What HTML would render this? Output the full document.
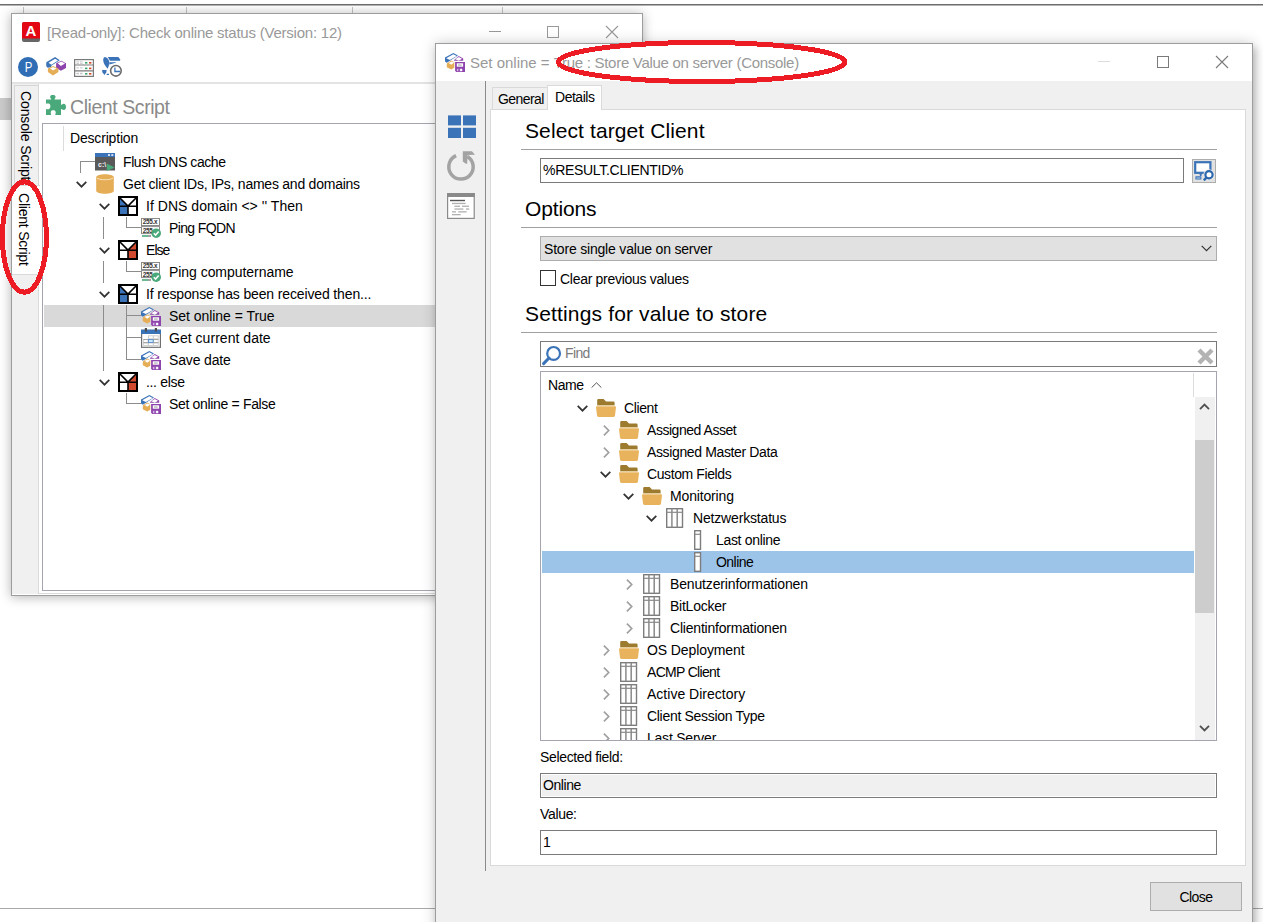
<!DOCTYPE html>
<html lang="en"><head><meta charset="utf-8"><title>Check online status</title><style>
*{box-sizing:border-box;margin:0;padding:0}
html,body{width:1263px;height:922px;overflow:hidden;background:#fff}
body{position:relative;font-family:"Liberation Sans",Arial,sans-serif;font-size:14px;color:#000}
.a{position:absolute}
.t{position:absolute;white-space:nowrap;line-height:22px;height:22px}
.win{position:absolute;border:1px solid #9d9d9d}
.w1{box-shadow:0 1px 11px rgba(0,0,0,.30)}
.w2{box-shadow:0 0 13px rgba(0,0,0,.20),3px 5px 7px rgba(0,0,0,.18)}
.title{position:absolute;white-space:nowrap;color:#999;line-height:20px;height:20px}
.hl{position:absolute;height:1px;background:#a0a0a0}
.vl{position:absolute;width:1px;background:#a0a0a0}
.h1{position:absolute;white-space:nowrap;line-height:26px;height:26px}
.box{position:absolute;border:1px solid #7a7a7a;background:#fff;height:25px}
svg{position:absolute;overflow:visible}
</style></head><body>
<div class="a" style="left:0;top:0;width:1263px;height:4px;background:#fff"></div>
<div class="a" style="left:0;top:4px;width:1263px;height:1px;background:#6d6d6d"></div>
<div class="a" style="left:0;top:5px;width:1263px;height:1px;background:#b5b5b5"></div>
<div class="vl" style="left:23px;top:7px;height:7px;background:#c6c6c6"></div>
<div class="vl" style="left:186px;top:7px;height:7px;background:#c6c6c6"></div>
<div class="vl" style="left:352px;top:7px;height:7px;background:#c6c6c6"></div>
<div class="vl" style="left:502px;top:7px;height:7px;background:#c6c6c6"></div>
<div class="a" style="left:0;top:98px;width:12px;height:22px;background:#cbcbcb"></div>
<div class="hl" style="left:0;top:908px;width:1263px;background:#a9a9a9"></div>
<div class="win w1" style="left:11px;top:13px;width:632px;height:583px;background:#fff"></div>
<div class="a" style="left:12px;top:14px;width:630px;height:581px;overflow:hidden" id="w1">
<svg style="left:10px;top:8px" width="18" height="20" viewBox="0 0 18 20"><rect width="18" height="20" rx="2" fill="#666"/><path d="M0 2 Q0 0 2 0 H16 Q18 0 18 2 V16.5 H0 Z" fill="#e30613"/><text x="9" y="13.6" text-anchor="middle" font-size="15" font-weight="bold" fill="#fff" font-family="Liberation Sans,sans-serif">A</text></svg>
<div class="title" style="left:35px;top:9px;font-size:15px;letter-spacing:-0.225px">[Read-only]: Check online status (Version: 12)</div>
<div class="a" style="left:477px;top:17px;width:12px;height:1px;background:#999"></div>
<div class="a" style="left:535px;top:12px;width:12px;height:12px;border:1px solid #999"></div>
<svg style="left:594px;top:12px" width="12" height="12" viewBox="0 0 12 12"><path d="M0 0 L12 12 M12 0 L0 12" stroke="#999" stroke-width="1.1" fill="none"/></svg>
<svg style="left:6px;top:43px" width="20" height="20" viewBox="0 0 20 20"><circle cx="10" cy="10" r="10" fill="#2f6db5"/><text x="0" y="0" transform="translate(6.7 15.3) scale(0.78 1)" font-size="14.6" fill="#fff" font-family="Liberation Sans,sans-serif">P</text></svg>
<svg style="left:34px;top:43px" width="20" height="20" viewBox="0 0 20 20"><path d="M0.25 5.2 L9.1 0.1 L13.8 3.2 L5.6 8.6 L5 10.2 L1.7 10.8 L0.25 9.3 Z" fill="#3b73b9"/><path d="M2.5 5.85 L9.1 1.7 L12 3.6 L5.4 7.7 Z" fill="#fff"/><path d="M15.3 3.8 L20 6.3 V11 L14.9 13.7 L10.1 11 V6.3 Z" fill="#8e44ad"/><path d="M11.6 6.3 L15.3 4.6 L19 6.5 L14.9 8.9 Z" fill="#fff"/><path d="M7 9.1 L12.4 11.6 V15.1 L7 18.6 L1.9 15.1 V11.6 Z" fill="#e5ad55"/><path d="M4.2 11.4 L7 10 L10.5 11.4 L7 13.5 Z" fill="#fff"/></svg>
<svg style="left:62px;top:45px" width="20" height="18" viewBox="0 0 20 18"><rect x="0.6" y="0.6" width="18.8" height="16.8" fill="#fff" stroke="#7a7a7a" stroke-width="1.2"/><path d="M0.6 6 H19.4 M0.6 11.8 H19.4" stroke="#7a7a7a" stroke-width="1.2"/><g fill="#c4c4c4"><rect x="2.4" y="2.4" width="2.6" height="1"/><rect x="6" y="2.4" width="2.6" height="1"/><rect x="2.4" y="4" width="2.6" height="0.8"/><rect x="6" y="4" width="2.6" height="0.8"/><rect x="2.4" y="8.4" width="2.6" height="1"/><rect x="6" y="8.4" width="2.6" height="1"/><rect x="2.4" y="13.8" width="2.6" height="1.4"/><rect x="6" y="13.8" width="2.6" height="1.4"/></g><g fill="#3aa86b"><rect x="11" y="3" width="2.4" height="1.6"/><rect x="11" y="8.6" width="2.4" height="1.6"/><rect x="11" y="14" width="2.4" height="1.6"/></g><g fill="#d1492e"><rect x="15" y="3" width="2.4" height="1.6"/><rect x="15" y="8.6" width="2.4" height="1.6"/><rect x="15" y="14" width="2.4" height="1.6"/></g></svg>
<svg style="left:90px;top:43px" width="21" height="21" viewBox="0 0 21 21"><path d="M3 0.1 C1 0.6 0.8 3.6 1.8 6 C2.8 8.4 4.4 10.4 5.6 11.7 C6.6 10 7.2 7.4 7.3 4.9 C6.8 2.8 5.6 0.6 3 0.1 Z" fill="#3b73b9"/><path d="M5.9 0.1 H16.3 L18.3 2.6 L18 3.8 H7.8 Z" fill="#3b73b9"/><path d="M7.3 5.2 H14 L13.8 5.8 L7.3 7.4 Z" fill="#3b73b9"/><path d="M0 13.1 H4.7 L4.2 15.6 L2.5 17.9 L0.5 15.6 Z" fill="#3b73b9"/><path d="M5 16.7 H7 V17.9 H4.5 Z" fill="#3b73b9"/><circle cx="13.9" cy="13.8" r="5.3" fill="#fff" stroke="#6a6a6a" stroke-width="1.6"/><path d="M12.9 10.4 V14.5 H18" fill="none" stroke="#3b73b9" stroke-width="1.3"/></svg>
<div class="a" style="left:0px;top:68px;width:630px;height:2px;background:#e3e3e3"></div>
<div class="a" style="left:0px;top:70px;width:27px;height:510px;background:#f0f0f0"></div>
<div class="a" style="left:26px;top:70px;width:604px;height:510px;border-left:1px solid #dadada;border-bottom:1px solid #dadada"></div>
<div class="a" style="left:2px;top:71px;width:25px;height:101px;background:#f0f0f0;border:1px solid #d6d6d6"></div>
<div class="a" style="left:0px;top:171px;width:28px;height:90px;background:#fff;border:1px solid #dadada;border-right:none;border-left:none"></div>
<div class="a" style="left:22px;top:77.3px;transform-origin:0 0;transform:rotate(90deg);white-space:nowrap;line-height:16px;height:16px;letter-spacing:-0.12px">Console Script</div>
<div class="a" style="left:19.5px;top:179.4px;transform-origin:0 0;transform:rotate(90deg);white-space:nowrap;line-height:16px;height:16px;letter-spacing:-0.22px">Client Script</div>
<svg style="left:34px;top:81px" width="20" height="20" viewBox="0 0 20 20"><path d="M0 4.6 H5.2 C5.2 3.6 4 3 4.1 1.8 C4.2 0.4 5.6 0 6.85 0 C8.1 0 9.5 0.4 9.6 1.8 C9.7 3 8.5 3.6 8.5 4.6 H15 V9.8 C16 9.8 16.6 8.7 17.8 8.7 C19.2 8.8 20 10.2 20 11.9 C20 13.6 19.2 15 17.8 15 C16.6 15 16 14 15 14 V19.9 H9.3 C9.3 18.9 9.9 18.2 9.7 17 C9.4 15.6 8.3 15.2 7.2 15.2 C6.1 15.2 5 15.6 4.8 17 C4.6 18.2 5.1 18.9 5.1 19.9 H0 V13.9 C1 13.9 1.6 14.4 2.6 14.2 C3.8 13.9 4.4 12.6 4.4 11.3 C4.4 10 3.8 8.9 2.6 8.6 C1.6 8.4 1 8.7 0 8.7 Z" fill="#4aa97a"/></svg>
<div class="a" style="left:58px;top:81px;font-size:19.5px;letter-spacing:-0.433px;white-space:nowrap;line-height:24px;color:#8a8a8a">Client Script</div>
<div class="a" style="left:30px;top:109px;width:610px;height:468px;border:1px solid #a5a5b0;background:#fff"></div>
<div class="vl" style="left:51px;top:112px;height:25px;background:#dcdcdc"></div>
<div class="t" style="left:58px;top:113px;letter-spacing:-0.176px">Description</div>
<div class="hl" style="left:68px;top:147px;width:15px;background:#8c8c8c"></div>
<svg style="left:83px;top:139px" width="20" height="18" viewBox="0 0 20 18"><rect x="0" y="0" width="20" height="17.5" fill="#595959"/><rect x="0" y="0" width="20" height="4" fill="#3b73b9"/><rect x="13" y="1.3" width="2" height="1.5" fill="#fff"/><rect x="16.3" y="1.3" width="2" height="1.5" fill="#fff"/><text x="3" y="14.2" font-size="7" font-weight="bold" fill="#f2f2f2" font-family="Liberation Sans,sans-serif">c:\</text><path d="M11.8 10.6 L19.6 14.6 L11.8 18 Z" fill="#4aa97a"/></svg>
<div class="t" style="left:111px;top:137px;letter-spacing:-0.423px">Flush DNS cache</div>
<svg style="left:64px;top:167px" width="11" height="7" viewBox="0 0 11 7"><path d="M0.7 0.9 L5.5 5.7 L10.3 0.9" fill="none" stroke="#333" stroke-width="1.7"/></svg>
<svg style="left:84px;top:160px" width="18" height="20" viewBox="0 0 18 20"><path d="M0.2 3.2 C0.2 -0.8 17.8 -0.8 17.8 3.2 V16.8 C17.8 20.8 0.2 20.8 0.2 16.8 Z" fill="#e5ad55"/><path d="M0.8 3.8 C2.4 6.4 15.6 6.4 17.2 3.8" fill="none" stroke="#f8e3bd" stroke-width="1"/></svg>
<div class="t" style="left:111px;top:159px;letter-spacing:-0.237px">Get client IDs, IPs, names and domains</div>
<svg style="left:87px;top:189px" width="11" height="7" viewBox="0 0 11 7"><path d="M0.7 0.9 L5.5 5.7 L10.3 0.9" fill="none" stroke="#333" stroke-width="1.7"/></svg>
<svg style="left:106px;top:182px" width="20" height="20" viewBox="0 0 20 20"><rect x="0" y="0" width="20" height="20" fill="#fff"/><path d="M1 1.5 L10 10 H1 Z" fill="#3b73b9"/><rect x="1" y="10" width="9" height="9" fill="#3b73b9"/><rect x="1" y="1" width="18" height="18" fill="none" stroke="#000" stroke-width="2"/><path d="M1.5 1.5 L10 10 L18.5 1.5 M10 10 V19 M1 10.3 H19" fill="none" stroke="#000" stroke-width="1.6"/></svg>
<div class="t" style="left:134px;top:181px;letter-spacing:0.035px">If DNS domain &lt;&gt; '' Then</div>
<div class="hl" style="left:114px;top:213px;width:15px;background:#8c8c8c"></div>
<svg style="left:129px;top:204px" width="20" height="20" viewBox="0 0 20 20"><rect x="0.5" y="0.5" width="18" height="7" fill="#fff" stroke="#8a8a8a"/><rect x="0.5" y="8.6" width="18" height="7" fill="#fff" stroke="#8a8a8a"/><text x="1.8" y="6.4" font-size="6.4" font-weight="bold" fill="#333" font-family="Liberation Sans,sans-serif" letter-spacing="-0.3">255.x</text><text x="1.8" y="14.5" font-size="6.4" font-weight="bold" fill="#333" font-family="Liberation Sans,sans-serif" letter-spacing="-0.3">255</text><rect x="1" y="17.2" width="6" height="1.6" fill="#4aa97a"/><rect x="7" y="17.2" width="3" height="1.6" fill="#8a8a8a"/><circle cx="15.2" cy="15.2" r="4.8" fill="#4aa97a"/><path d="M12.8 15.2 L14.6 17.1 L17.7 13.5" fill="none" stroke="#fff" stroke-width="1.5"/></svg>
<div class="t" style="left:157px;top:203px;letter-spacing:-0.62px">Ping FQDN</div>
<svg style="left:87px;top:233px" width="11" height="7" viewBox="0 0 11 7"><path d="M0.7 0.9 L5.5 5.7 L10.3 0.9" fill="none" stroke="#333" stroke-width="1.7"/></svg>
<svg style="left:106px;top:226px" width="20" height="20" viewBox="0 0 20 20"><rect x="0" y="0" width="20" height="20" fill="#fff"/><path d="M19 1.5 L10 10 H19 Z" fill="#d1492e"/><rect x="10" y="10" width="9" height="9" fill="#d1492e"/><rect x="1" y="1" width="18" height="18" fill="none" stroke="#000" stroke-width="2"/><path d="M1.5 1.5 L10 10 L18.5 1.5 M10 10 V19 M1 10.3 H19" fill="none" stroke="#000" stroke-width="1.6"/></svg>
<div class="t" style="left:134px;top:225px;letter-spacing:-0.959px">Else</div>
<div class="hl" style="left:114px;top:257px;width:15px;background:#8c8c8c"></div>
<svg style="left:129px;top:248px" width="20" height="20" viewBox="0 0 20 20"><rect x="0.5" y="0.5" width="18" height="7" fill="#fff" stroke="#8a8a8a"/><rect x="0.5" y="8.6" width="18" height="7" fill="#fff" stroke="#8a8a8a"/><text x="1.8" y="6.4" font-size="6.4" font-weight="bold" fill="#333" font-family="Liberation Sans,sans-serif" letter-spacing="-0.3">255.x</text><text x="1.8" y="14.5" font-size="6.4" font-weight="bold" fill="#333" font-family="Liberation Sans,sans-serif" letter-spacing="-0.3">255</text><rect x="1" y="17.2" width="6" height="1.6" fill="#4aa97a"/><rect x="7" y="17.2" width="3" height="1.6" fill="#8a8a8a"/><circle cx="15.2" cy="15.2" r="4.8" fill="#4aa97a"/><path d="M12.8 15.2 L14.6 17.1 L17.7 13.5" fill="none" stroke="#fff" stroke-width="1.5"/></svg>
<div class="t" style="left:157px;top:247px;letter-spacing:-0.047px">Ping computername</div>
<svg style="left:87px;top:277px" width="11" height="7" viewBox="0 0 11 7"><path d="M0.7 0.9 L5.5 5.7 L10.3 0.9" fill="none" stroke="#333" stroke-width="1.7"/></svg>
<svg style="left:106px;top:270px" width="20" height="20" viewBox="0 0 20 20"><rect x="0" y="0" width="20" height="20" fill="#fff"/><path d="M1 1.5 L10 10 H1 Z" fill="#3b73b9"/><rect x="1" y="10" width="9" height="9" fill="#3b73b9"/><rect x="1" y="1" width="18" height="18" fill="none" stroke="#000" stroke-width="2"/><path d="M1.5 1.5 L10 10 L18.5 1.5 M10 10 V19 M1 10.3 H19" fill="none" stroke="#000" stroke-width="1.6"/></svg>
<div class="t" style="left:134px;top:269px;letter-spacing:-0.137px">If response has been received then...</div>
<div class="a" style="left:32px;top:291px;width:600px;height:22px;background:#d9d9d9"></div>
<div class="hl" style="left:114px;top:301px;width:15px;background:#8c8c8c"></div>
<svg style="left:129px;top:292px" width="20" height="20" viewBox="0 0 20 20"><path d="M1.8 11.5 L6.2 8.6 L9.3 10.2 V15.7 L6.2 17.5 L1.8 15.2 Z" fill="#e5ad55"/><path d="M3.6 11 L6.4 9.5 L9.2 10.6 L6.4 12.7 Z" fill="#fff"/><path d="M0 5.55 L8.3 1 L13 3.5 L5.4 8.4 L1.8 10.8 L0 9.5 Z" fill="#3b73b9"/><path d="M1.25 6.3 L8.3 2.3 L11.7 4 L4.9 7.9 Z" fill="#fff"/><path d="M9.1 7.9 L13.75 4.1 L18.2 6.6 V8.8 H9.1 Z" fill="#8e44ad"/><path d="M10.2 7.2 L13.75 5 L17 6.85 L13.75 8.8 Z" fill="#fff"/><path d="M10.1 10 H20 V19.9 H11.2 L10.1 18.8 Z" fill="#8e44ad"/><rect x="11.8" y="11.3" width="6.3" height="3.4" fill="#fff"/><rect x="13" y="12.5" width="3.7" height="1.1" fill="#aaa"/><rect x="11.9" y="16.8" width="5.5" height="2.4" fill="#d4b8e3"/><rect x="13.4" y="16.8" width="1.4" height="2.4" fill="#8e44ad"/><rect x="15.2" y="16.9" width="1.8" height="2.2" fill="#fff"/></svg>
<div class="t" style="left:157px;top:291px;letter-spacing:-0.044px">Set online = True</div>
<div class="hl" style="left:114px;top:323px;width:15px;background:#8c8c8c"></div>
<svg style="left:129px;top:314px" width="20" height="20" viewBox="0 0 20 20"><rect x="0.6" y="2.4" width="18.8" height="16.9" fill="#fff" stroke="#6f6f6f" stroke-width="1.2"/><rect x="0" y="1.6" width="20" height="4.4" fill="#3b73b9"/><rect x="3.8" y="0" width="2.2" height="3.6" fill="#4d4d4d"/><rect x="13.8" y="0" width="2.2" height="3.6" fill="#4d4d4d"/><g fill="#fff" stroke="#cdcdcd" stroke-width="0.9"><rect x="7.4" y="7.8" width="4.8" height="3"/><rect x="12.6" y="7.8" width="4.6" height="3"/><rect x="2.6" y="11.6" width="4.6" height="2.8"/><rect x="12.6" y="11.6" width="4.6" height="2.8"/><rect x="2.6" y="15" width="4.6" height="2.5"/><rect x="7.4" y="15" width="4.8" height="2.5"/><rect x="12.6" y="15" width="4.6" height="2.5"/></g><rect x="7.4" y="11.6" width="4.8" height="2.8" fill="#d3ecfd" stroke="#4d86c6" stroke-width="0.9"/><path d="M2.3 11.5 H7 M12.6 11.5 H17.4 M2.3 14.6 H7 M12.6 14.6 H17.4" stroke="#8f8f8f" stroke-width="0.7" fill="none"/></svg>
<div class="t" style="left:157px;top:313px;letter-spacing:0.033px">Get current date</div>
<div class="hl" style="left:114px;top:345px;width:15px;background:#8c8c8c"></div>
<svg style="left:129px;top:336px" width="20" height="20" viewBox="0 0 20 20"><path d="M1.8 11.5 L6.2 8.6 L9.3 10.2 V15.7 L6.2 17.5 L1.8 15.2 Z" fill="#e5ad55"/><path d="M3.6 11 L6.4 9.5 L9.2 10.6 L6.4 12.7 Z" fill="#fff"/><path d="M0 5.55 L8.3 1 L13 3.5 L5.4 8.4 L1.8 10.8 L0 9.5 Z" fill="#3b73b9"/><path d="M1.25 6.3 L8.3 2.3 L11.7 4 L4.9 7.9 Z" fill="#fff"/><path d="M9.1 7.9 L13.75 4.1 L18.2 6.6 V8.8 H9.1 Z" fill="#8e44ad"/><path d="M10.2 7.2 L13.75 5 L17 6.85 L13.75 8.8 Z" fill="#fff"/><path d="M10.1 10 H20 V19.9 H11.2 L10.1 18.8 Z" fill="#8e44ad"/><rect x="11.8" y="11.3" width="6.3" height="3.4" fill="#fff"/><rect x="13" y="12.5" width="3.7" height="1.1" fill="#aaa"/><rect x="11.9" y="16.8" width="5.5" height="2.4" fill="#d4b8e3"/><rect x="13.4" y="16.8" width="1.4" height="2.4" fill="#8e44ad"/><rect x="15.2" y="16.9" width="1.8" height="2.2" fill="#fff"/></svg>
<div class="t" style="left:157px;top:335px;letter-spacing:-0.151px">Save date</div>
<svg style="left:87px;top:365px" width="11" height="7" viewBox="0 0 11 7"><path d="M0.7 0.9 L5.5 5.7 L10.3 0.9" fill="none" stroke="#333" stroke-width="1.7"/></svg>
<svg style="left:106px;top:358px" width="20" height="20" viewBox="0 0 20 20"><rect x="0" y="0" width="20" height="20" fill="#fff"/><path d="M19 1.5 L10 10 H19 Z" fill="#d1492e"/><rect x="10" y="10" width="9" height="9" fill="#d1492e"/><rect x="1" y="1" width="18" height="18" fill="none" stroke="#000" stroke-width="2"/><path d="M1.5 1.5 L10 10 L18.5 1.5 M10 10 V19 M1 10.3 H19" fill="none" stroke="#000" stroke-width="1.6"/></svg>
<div class="t" style="left:134px;top:357px;letter-spacing:-0.331px">... else</div>
<div class="hl" style="left:114px;top:389px;width:15px;background:#8c8c8c"></div>
<svg style="left:129px;top:380px" width="20" height="20" viewBox="0 0 20 20"><path d="M1.8 11.5 L6.2 8.6 L9.3 10.2 V15.7 L6.2 17.5 L1.8 15.2 Z" fill="#e5ad55"/><path d="M3.6 11 L6.4 9.5 L9.2 10.6 L6.4 12.7 Z" fill="#fff"/><path d="M0 5.55 L8.3 1 L13 3.5 L5.4 8.4 L1.8 10.8 L0 9.5 Z" fill="#3b73b9"/><path d="M1.25 6.3 L8.3 2.3 L11.7 4 L4.9 7.9 Z" fill="#fff"/><path d="M9.1 7.9 L13.75 4.1 L18.2 6.6 V8.8 H9.1 Z" fill="#8e44ad"/><path d="M10.2 7.2 L13.75 5 L17 6.85 L13.75 8.8 Z" fill="#fff"/><path d="M10.1 10 H20 V19.9 H11.2 L10.1 18.8 Z" fill="#8e44ad"/><rect x="11.8" y="11.3" width="6.3" height="3.4" fill="#fff"/><rect x="13" y="12.5" width="3.7" height="1.1" fill="#aaa"/><rect x="11.9" y="16.8" width="5.5" height="2.4" fill="#d4b8e3"/><rect x="13.4" y="16.8" width="1.4" height="2.4" fill="#8e44ad"/><rect x="15.2" y="16.9" width="1.8" height="2.2" fill="#fff"/></svg>
<div class="t" style="left:157px;top:379px;letter-spacing:-0.332px">Set online = False</div>
<div class="vl" style="left:68px;top:147px;height:12px;background:#8c8c8c"></div>
<div class="vl" style="left:114px;top:203px;height:11px;background:#8c8c8c"></div>
<div class="vl" style="left:91px;top:203px;height:22px;background:#8c8c8c"></div>
<div class="vl" style="left:114px;top:247px;height:11px;background:#8c8c8c"></div>
<div class="vl" style="left:91px;top:247px;height:22px;background:#8c8c8c"></div>
<div class="vl" style="left:114px;top:291px;height:55px;background:#8c8c8c"></div>
<div class="vl" style="left:91px;top:291px;height:66px;background:#8c8c8c"></div>
<div class="vl" style="left:114px;top:379px;height:11px;background:#8c8c8c"></div>
</div>
<div class="win w2" style="left:435px;top:43px;width:818px;height:900px;background:#f0f0f0"></div>
<div class="a" style="left:436px;top:44px;width:816px;height:878px;overflow:hidden;background:#f0f0f0" id="w2">
<div class="a" style="left:0px;top:0px;width:816px;height:37px;background:#fff"></div>
<svg style="left:9px;top:8px" width="20" height="20" viewBox="0 0 20 20"><path d="M1.8 11.5 L6.2 8.6 L9.3 10.2 V15.7 L6.2 17.5 L1.8 15.2 Z" fill="#e5ad55"/><path d="M3.6 11 L6.4 9.5 L9.2 10.6 L6.4 12.7 Z" fill="#fff"/><path d="M0 5.55 L8.3 1 L13 3.5 L5.4 8.4 L1.8 10.8 L0 9.5 Z" fill="#3b73b9"/><path d="M1.25 6.3 L8.3 2.3 L11.7 4 L4.9 7.9 Z" fill="#fff"/><path d="M9.1 7.9 L13.75 4.1 L18.2 6.6 V8.8 H9.1 Z" fill="#8e44ad"/><path d="M10.2 7.2 L13.75 5 L17 6.85 L13.75 8.8 Z" fill="#fff"/><path d="M10.1 10 H20 V19.9 H11.2 L10.1 18.8 Z" fill="#8e44ad"/><rect x="11.8" y="11.3" width="6.3" height="3.4" fill="#fff"/><rect x="13" y="12.5" width="3.7" height="1.1" fill="#aaa"/><rect x="11.9" y="16.8" width="5.5" height="2.4" fill="#d4b8e3"/><rect x="13.4" y="16.8" width="1.4" height="2.4" fill="#8e44ad"/><rect x="15.2" y="16.9" width="1.8" height="2.2" fill="#fff"/></svg>
<div class="title" style="left:34px;top:9px;font-size:15px;letter-spacing:-0.009px">Set online = <span style="white-space:pre;letter-spacing:-0.283px">True : Store Value on server (Console)</span></div>
<div class="a" style="left:662px;top:17px;width:12px;height:1px;background:#dcdcdc"></div>
<div class="a" style="left:721px;top:12px;width:12px;height:12px;border:1px solid #7a7a7a"></div>
<svg style="left:780px;top:12px" width="12" height="12" viewBox="0 0 12 12"><path d="M0 0 L12 12 M12 0 L0 12" stroke="#7a7a7a" stroke-width="1.1" fill="none"/></svg>
<div class="vl" style="left:49px;top:37px;height:790px;background:#8a8a8a"></div>
<svg style="left:12px;top:71px" width="28" height="23" viewBox="0 0 28 23"><g fill="#3b73b9"><rect x="0" y="0.4" width="13" height="10"/><rect x="15" y="0.4" width="13" height="10"/><rect x="0" y="12.8" width="13" height="10.2"/><rect x="15" y="12.8" width="13" height="10.2"/></g></svg>
<svg style="left:11px;top:106px" width="29" height="31" viewBox="0 0 29 31"><path d="M9.1 5.7 A12.2 12.2 0 1 0 20.4 6.5" fill="none" stroke="#a3a3a3" stroke-width="3.5"/><path d="M15.8 1.2 H24.9 L28 4.7 L20.6 4.9 L20.2 13.8 H18.9 L15.8 11.4 Z" fill="#a3a3a3"/></svg>
<svg style="left:11px;top:149px" width="28" height="26" viewBox="0 0 28 26"><rect x="0.6" y="0.6" width="26.6" height="24.8" fill="#fff" stroke="#8a8a8a" stroke-width="1.2"/><rect x="0" y="0" width="27.8" height="4" fill="#8a8a8a"/><rect x="3" y="6.8" width="15" height="1.4" fill="#555"/><g fill="#b0b0b0"><rect x="5" y="9.8" width="13.6" height="1.3"/><rect x="7.4" y="12.6" width="5.6" height="1.3"/><rect x="15" y="12.6" width="7" height="1.3"/><rect x="7.4" y="15.4" width="9" height="1.3"/><rect x="19" y="15.4" width="3.2" height="1.3"/><rect x="5" y="18.2" width="4" height="1.3"/><rect x="11.2" y="18.2" width="8.4" height="1.3"/><rect x="5" y="21" width="8.6" height="1.3"/></g></svg>
<div class="a" style="left:54px;top:65px;width:756px;height:757px;background:#fff;border:1px solid #dadada"></div>
<div class="a" style="left:56px;top:43px;width:56px;height:22px;background:#f0f0f0;border:1px solid #dadada;border-bottom:none"></div>
<div class="a" style="left:111px;top:41px;width:55px;height:25px;background:#fff;border:1px solid #dadada;border-bottom:none"></div>
<div class="t" style="left:62px;top:44px;letter-spacing:-0.587px">General</div>
<div class="t" style="left:119px;top:42px;letter-spacing:-0.485px">Details</div>
<div class="h1" style="left:89px;top:74px;font-size:21px;letter-spacing:0.108px">Select target Client</div>
<div class="hl" style="left:85px;top:105px;width:696px"></div>
<div class="box" style="left:104px;top:114px;width:644px"></div>
<div class="t" style="left:107px;top:115px;letter-spacing:-0.301px">%RESULT.CLIENTID%</div>
<div class="a" style="left:756px;top:115px;width:24px;height:24px;background:#e1e1e1;border:1px solid #adadad"></div>
<svg style="left:758px;top:117px" width="21" height="21" viewBox="0 0 21 21"><rect x="1.2" y="1.2" width="15.2" height="10.6" fill="#fff" stroke="#3b73b9" stroke-width="2.2"/><path d="M5.4 12.6 H8 L7.4 15 H6 Z" fill="#3b73b9"/><rect x="1.4" y="15.2" width="6" height="3.4" rx="0.6" fill="#3b73b9"/><rect x="2.4" y="16.4" width="4" height="1.2" fill="#a9c4e4"/><circle cx="15" cy="13.8" r="5.6" fill="#e8e8e8"/><path d="M12.4 16.6 L9.6 19.6" stroke="#e8e8e8" stroke-width="4"/><circle cx="15" cy="13.8" r="3.6" fill="#fff" stroke="#2c68ae" stroke-width="2.2"/><path d="M12.4 16.6 L9.8 19.4" stroke="#2c68ae" stroke-width="2.4"/></svg>
<div class="h1" style="left:89px;top:152px;font-size:21px;letter-spacing:-0.139px">Options</div>
<div class="hl" style="left:85px;top:183px;width:696px"></div>
<div class="a" style="left:104px;top:192px;width:677px;height:25px;background:#e1e1e1;border:1px solid #adadad"></div>
<div class="t" style="left:108px;top:194px;letter-spacing:-0.191px">Store single value on server</div>
<svg style="left:765px;top:201px" width="11" height="7" viewBox="0 0 11 7"><path d="M0.7 0.9 L5.5 5.7 L10.3 0.9" fill="none" stroke="#333" stroke-width="1.2"/></svg>
<div class="a" style="left:104px;top:226px;width:16px;height:16px;background:#fff;border:1px solid #333"></div>
<div class="t" style="left:124px;top:224px;letter-spacing:-0.287px">Clear previous values</div>
<div class="h1" style="left:89px;top:257px;font-size:21px;letter-spacing:0.158px">Settings for value to store</div>
<div class="hl" style="left:85px;top:288px;width:696px"></div>
<div class="box" style="left:104px;top:297px;width:677px;height:26px"></div>
<svg style="left:106px;top:301px" width="20" height="20" viewBox="0 0 20 20"><circle cx="11.6" cy="8.4" r="6.4" fill="#fff" stroke="#3b73b9" stroke-width="2.2"/><path d="M7 13 L1.6 18.6" stroke="#3b73b9" stroke-width="3" stroke-linecap="round"/></svg>
<div class="t" style="left:129px;top:298px;letter-spacing:-0.609px;color:#7a7a7a">Find</div>
<svg style="left:760.5999999999999px;top:303.5px" width="17" height="17" viewBox="0 0 17 17"><path d="M2 2 L15 15 M15 2 L2 15" stroke="#b3b3b3" stroke-width="4.4" stroke-linecap="butt"/></svg>
<div class="a" style="left:104px;top:327px;width:677px;height:370px;border:1px solid #a5a5b0;background:#fff"></div>
<div class="a" style="left:105px;top:328px;width:675px;height:368px;overflow:hidden">
<div class="t" style="left:7px;top:2px;letter-spacing:-0.44px">Name</div>
<svg style="left:50px;top:10px" width="11" height="6" viewBox="0 0 11 6"><path d="M0.6 5.6 L5.5 0.8 L10.4 5.6" fill="none" stroke="#555" stroke-width="1"/></svg>
<div class="vl" style="left:652px;top:1px;height:24px;background:#dcdcdc"></div>
<svg style="left:36px;top:33px" width="11" height="7" viewBox="0 0 11 7"><path d="M0.7 0.9 L5.5 5.7 L10.3 0.9" fill="none" stroke="#333" stroke-width="1.7"/></svg>
<svg style="left:55px;top:27px" width="20" height="18" viewBox="0 0 20 18"><path d="M1.2 1.2 Q1.2 0 2.4 0 H7.6 L10 2.6 H17.4 Q18.6 2.6 18.6 3.8 V6.4 H1.2 Z" fill="#9c7a2e"/><path d="M0 8 Q0 7.2 1 7.2 H19 Q20 7.2 20 8 L19 16.6 Q18.9 18 17.6 18 H2.4 Q1.1 18 1 16.6 Z" fill="#e8b35c"/><rect x="1.2" y="6.4" width="17.4" height="0.8" fill="#f3d9a4"/></svg>
<div class="t" style="left:83px;top:25px;letter-spacing:-0.383px">Client</div>
<svg style="left:62px;top:53px" width="7" height="11" viewBox="0 0 7 11"><path d="M0.9 0.7 L5.7 5.5 L0.9 10.3" fill="none" stroke="#a0a0a0" stroke-width="1.7"/></svg>
<svg style="left:78px;top:49px" width="20" height="18" viewBox="0 0 20 18"><path d="M1.2 1.2 Q1.2 0 2.4 0 H7.6 L10 2.6 H17.4 Q18.6 2.6 18.6 3.8 V6.4 H1.2 Z" fill="#9c7a2e"/><path d="M0 8 Q0 7.2 1 7.2 H19 Q20 7.2 20 8 L19 16.6 Q18.9 18 17.6 18 H2.4 Q1.1 18 1 16.6 Z" fill="#e8b35c"/><rect x="1.2" y="6.4" width="17.4" height="0.8" fill="#f3d9a4"/></svg>
<div class="t" style="left:106px;top:47px;letter-spacing:-0.46px">Assigned Asset</div>
<svg style="left:62px;top:75px" width="7" height="11" viewBox="0 0 7 11"><path d="M0.9 0.7 L5.7 5.5 L0.9 10.3" fill="none" stroke="#a0a0a0" stroke-width="1.7"/></svg>
<svg style="left:78px;top:71px" width="20" height="18" viewBox="0 0 20 18"><path d="M1.2 1.2 Q1.2 0 2.4 0 H7.6 L10 2.6 H17.4 Q18.6 2.6 18.6 3.8 V6.4 H1.2 Z" fill="#9c7a2e"/><path d="M0 8 Q0 7.2 1 7.2 H19 Q20 7.2 20 8 L19 16.6 Q18.9 18 17.6 18 H2.4 Q1.1 18 1 16.6 Z" fill="#e8b35c"/><rect x="1.2" y="6.4" width="17.4" height="0.8" fill="#f3d9a4"/></svg>
<div class="t" style="left:106px;top:69px;letter-spacing:-0.367px">Assigned Master Data</div>
<svg style="left:59px;top:99px" width="11" height="7" viewBox="0 0 11 7"><path d="M0.7 0.9 L5.5 5.7 L10.3 0.9" fill="none" stroke="#333" stroke-width="1.7"/></svg>
<svg style="left:78px;top:93px" width="20" height="18" viewBox="0 0 20 18"><path d="M1.2 1.2 Q1.2 0 2.4 0 H7.6 L10 2.6 H17.4 Q18.6 2.6 18.6 3.8 V6.4 H1.2 Z" fill="#9c7a2e"/><path d="M0 8 Q0 7.2 1 7.2 H19 Q20 7.2 20 8 L19 16.6 Q18.9 18 17.6 18 H2.4 Q1.1 18 1 16.6 Z" fill="#e8b35c"/><rect x="1.2" y="6.4" width="17.4" height="0.8" fill="#f3d9a4"/></svg>
<div class="t" style="left:106px;top:91px;letter-spacing:-0.398px">Custom Fields</div>
<svg style="left:82px;top:121px" width="11" height="7" viewBox="0 0 11 7"><path d="M0.7 0.9 L5.5 5.7 L10.3 0.9" fill="none" stroke="#333" stroke-width="1.7"/></svg>
<svg style="left:101px;top:115px" width="20" height="18" viewBox="0 0 20 18"><path d="M1.2 1.2 Q1.2 0 2.4 0 H7.6 L10 2.6 H17.4 Q18.6 2.6 18.6 3.8 V6.4 H1.2 Z" fill="#9c7a2e"/><path d="M0 8 Q0 7.2 1 7.2 H19 Q20 7.2 20 8 L19 16.6 Q18.9 18 17.6 18 H2.4 Q1.1 18 1 16.6 Z" fill="#e8b35c"/><rect x="1.2" y="6.4" width="17.4" height="0.8" fill="#f3d9a4"/></svg>
<div class="t" style="left:129px;top:113px;letter-spacing:-0.158px">Monitoring</div>
<svg style="left:105px;top:143px" width="11" height="7" viewBox="0 0 11 7"><path d="M0.7 0.9 L5.5 5.7 L10.3 0.9" fill="none" stroke="#333" stroke-width="1.7"/></svg>
<svg style="left:125px;top:136px" width="18" height="20" viewBox="0 0 18 20"><rect x="0.7" y="0.7" width="15.8" height="18.6" fill="#fff" stroke="#7d7d7d" stroke-width="1.4"/><path d="M0.7 4.3 H16.5" stroke="#8a8a8a" stroke-width="1.2" fill="none"/><path d="M5.9 0.7 V19.3 M11.2 0.7 V19.3" stroke="#8a8a8a" stroke-width="1.5" fill="none"/></svg>
<div class="t" style="left:152px;top:135px;letter-spacing:-0.172px">Netzwerkstatus</div>
<svg style="left:153.39999999999998px;top:158px" width="8" height="20" viewBox="0 0 8 20"><rect x="0.7" y="0.7" width="5.8" height="18.6" fill="#fff" stroke="#7d7d7d" stroke-width="1.4"/><path d="M0.7 4.3 H6.5" stroke="#8a8a8a" stroke-width="1.2" fill="none"/></svg>
<div class="t" style="left:175px;top:157px;letter-spacing:-0.32px">Last online</div>
<div class="a" style="left:1px;top:179px;width:652px;height:22px;background:#9cc4e8"></div>
<svg style="left:153.39999999999998px;top:180px" width="8" height="20" viewBox="0 0 8 20"><rect x="0.7" y="0.7" width="5.8" height="18.6" fill="#fff" stroke="#7d7d7d" stroke-width="1.4"/><path d="M0.7 4.3 H6.5" stroke="#8a8a8a" stroke-width="1.2" fill="none"/></svg>
<div class="t" style="left:175px;top:179px;letter-spacing:-0.528px">Online</div>
<svg style="left:85px;top:207px" width="7" height="11" viewBox="0 0 7 11"><path d="M0.9 0.7 L5.7 5.5 L0.9 10.3" fill="none" stroke="#a0a0a0" stroke-width="1.7"/></svg>
<svg style="left:102px;top:202px" width="18" height="20" viewBox="0 0 18 20"><rect x="0.7" y="0.7" width="15.8" height="18.6" fill="#fff" stroke="#7d7d7d" stroke-width="1.4"/><path d="M0.7 4.3 H16.5" stroke="#8a8a8a" stroke-width="1.2" fill="none"/><path d="M5.9 0.7 V19.3 M11.2 0.7 V19.3" stroke="#8a8a8a" stroke-width="1.5" fill="none"/></svg>
<div class="t" style="left:129px;top:201px;letter-spacing:-0.146px">Benutzerinformationen</div>
<svg style="left:85px;top:229px" width="7" height="11" viewBox="0 0 7 11"><path d="M0.9 0.7 L5.7 5.5 L0.9 10.3" fill="none" stroke="#a0a0a0" stroke-width="1.7"/></svg>
<svg style="left:102px;top:224px" width="18" height="20" viewBox="0 0 18 20"><rect x="0.7" y="0.7" width="15.8" height="18.6" fill="#fff" stroke="#7d7d7d" stroke-width="1.4"/><path d="M0.7 4.3 H16.5" stroke="#8a8a8a" stroke-width="1.2" fill="none"/><path d="M5.9 0.7 V19.3 M11.2 0.7 V19.3" stroke="#8a8a8a" stroke-width="1.5" fill="none"/></svg>
<div class="t" style="left:129px;top:223px;letter-spacing:-0.24px">BitLocker</div>
<svg style="left:85px;top:251px" width="7" height="11" viewBox="0 0 7 11"><path d="M0.9 0.7 L5.7 5.5 L0.9 10.3" fill="none" stroke="#a0a0a0" stroke-width="1.7"/></svg>
<svg style="left:102px;top:246px" width="18" height="20" viewBox="0 0 18 20"><rect x="0.7" y="0.7" width="15.8" height="18.6" fill="#fff" stroke="#7d7d7d" stroke-width="1.4"/><path d="M0.7 4.3 H16.5" stroke="#8a8a8a" stroke-width="1.2" fill="none"/><path d="M5.9 0.7 V19.3 M11.2 0.7 V19.3" stroke="#8a8a8a" stroke-width="1.5" fill="none"/></svg>
<div class="t" style="left:129px;top:245px;letter-spacing:-0.201px">Clientinformationen</div>
<svg style="left:62px;top:273px" width="7" height="11" viewBox="0 0 7 11"><path d="M0.9 0.7 L5.7 5.5 L0.9 10.3" fill="none" stroke="#a0a0a0" stroke-width="1.7"/></svg>
<svg style="left:78px;top:269px" width="20" height="18" viewBox="0 0 20 18"><path d="M1.2 1.2 Q1.2 0 2.4 0 H7.6 L10 2.6 H17.4 Q18.6 2.6 18.6 3.8 V6.4 H1.2 Z" fill="#9c7a2e"/><path d="M0 8 Q0 7.2 1 7.2 H19 Q20 7.2 20 8 L19 16.6 Q18.9 18 17.6 18 H2.4 Q1.1 18 1 16.6 Z" fill="#e8b35c"/><rect x="1.2" y="6.4" width="17.4" height="0.8" fill="#f3d9a4"/></svg>
<div class="t" style="left:106px;top:267px;letter-spacing:-0.102px">OS Deployment</div>
<svg style="left:62px;top:295px" width="7" height="11" viewBox="0 0 7 11"><path d="M0.9 0.7 L5.7 5.5 L0.9 10.3" fill="none" stroke="#a0a0a0" stroke-width="1.7"/></svg>
<svg style="left:79px;top:290px" width="18" height="20" viewBox="0 0 18 20"><rect x="0.7" y="0.7" width="15.8" height="18.6" fill="#fff" stroke="#7d7d7d" stroke-width="1.4"/><path d="M0.7 4.3 H16.5" stroke="#8a8a8a" stroke-width="1.2" fill="none"/><path d="M5.9 0.7 V19.3 M11.2 0.7 V19.3" stroke="#8a8a8a" stroke-width="1.5" fill="none"/></svg>
<div class="t" style="left:106px;top:289px;letter-spacing:-0.681px">ACMP Client</div>
<svg style="left:62px;top:317px" width="7" height="11" viewBox="0 0 7 11"><path d="M0.9 0.7 L5.7 5.5 L0.9 10.3" fill="none" stroke="#a0a0a0" stroke-width="1.7"/></svg>
<svg style="left:79px;top:312px" width="18" height="20" viewBox="0 0 18 20"><rect x="0.7" y="0.7" width="15.8" height="18.6" fill="#fff" stroke="#7d7d7d" stroke-width="1.4"/><path d="M0.7 4.3 H16.5" stroke="#8a8a8a" stroke-width="1.2" fill="none"/><path d="M5.9 0.7 V19.3 M11.2 0.7 V19.3" stroke="#8a8a8a" stroke-width="1.5" fill="none"/></svg>
<div class="t" style="left:106px;top:311px;letter-spacing:0.011px">Active Directory</div>
<svg style="left:62px;top:339px" width="7" height="11" viewBox="0 0 7 11"><path d="M0.9 0.7 L5.7 5.5 L0.9 10.3" fill="none" stroke="#a0a0a0" stroke-width="1.7"/></svg>
<svg style="left:79px;top:334px" width="18" height="20" viewBox="0 0 18 20"><rect x="0.7" y="0.7" width="15.8" height="18.6" fill="#fff" stroke="#7d7d7d" stroke-width="1.4"/><path d="M0.7 4.3 H16.5" stroke="#8a8a8a" stroke-width="1.2" fill="none"/><path d="M5.9 0.7 V19.3 M11.2 0.7 V19.3" stroke="#8a8a8a" stroke-width="1.5" fill="none"/></svg>
<div class="t" style="left:106px;top:333px;letter-spacing:-0.304px">Client Session Type</div>
<svg style="left:62px;top:361px" width="7" height="11" viewBox="0 0 7 11"><path d="M0.9 0.7 L5.7 5.5 L0.9 10.3" fill="none" stroke="#a0a0a0" stroke-width="1.7"/></svg>
<svg style="left:79px;top:356px" width="18" height="20" viewBox="0 0 18 20"><rect x="0.7" y="0.7" width="15.8" height="18.6" fill="#fff" stroke="#7d7d7d" stroke-width="1.4"/><path d="M0.7 4.3 H16.5" stroke="#8a8a8a" stroke-width="1.2" fill="none"/><path d="M5.9 0.7 V19.3 M11.2 0.7 V19.3" stroke="#8a8a8a" stroke-width="1.5" fill="none"/></svg>
<div class="t" style="left:106px;top:355px;letter-spacing:-0.227px">Last Server</div>
<div class="a" style="left:654px;top:25px;width:20px;height:343px;background:#f0f0f0"></div>
<div class="a" style="left:654px;top:68px;width:19px;height:173px;background:#cdcdcd"></div>
<svg style="left:658px;top:31px" width="11" height="7" viewBox="0 0 11 7"><path d="M1 6.2 L5.5 1.6 L10 6.2" fill="none" stroke="#505050" stroke-width="1.8"/></svg>
<svg style="left:658px;top:353px" width="11" height="7" viewBox="0 0 11 7"><path d="M1 0.8 L5.5 5.4 L10 0.8" fill="none" stroke="#505050" stroke-width="1.8"/></svg>
</div>
<div class="t" style="left:104px;top:702px;letter-spacing:-0.344px">Selected field:</div>
<div class="box" style="left:104px;top:729px;width:677px;background:#f0f0f0;box-shadow:inset 0 0 0 1px #fff"></div>
<div class="t" style="left:107px;top:730px;letter-spacing:-0.428px">Online</div>
<div class="t" style="left:104px;top:759px;letter-spacing:-0.329px">Value:</div>
<div class="box" style="left:104px;top:786px;width:677px"></div>
<div class="t" style="left:107px;top:787px">1</div>
<div class="a" style="left:714px;top:838px;width:92px;height:29px;background:#e1e1e1;border:1px solid #adadad"></div>
<div class="t" style="left:743.5px;top:842px;letter-spacing:-0.559px">Close</div>
</div>
<svg style="left:0;top:0;pointer-events:none" width="1263" height="922" viewBox="0 0 1263 922"><g fill="none" stroke="#ed1c24" stroke-width="5" shape-rendering="crispEdges"><ellipse cx="24.4" cy="237" rx="22" ry="55.2"/><ellipse cx="701.6" cy="62" rx="143.2" ry="19.5"/></g></svg>
</body></html>
